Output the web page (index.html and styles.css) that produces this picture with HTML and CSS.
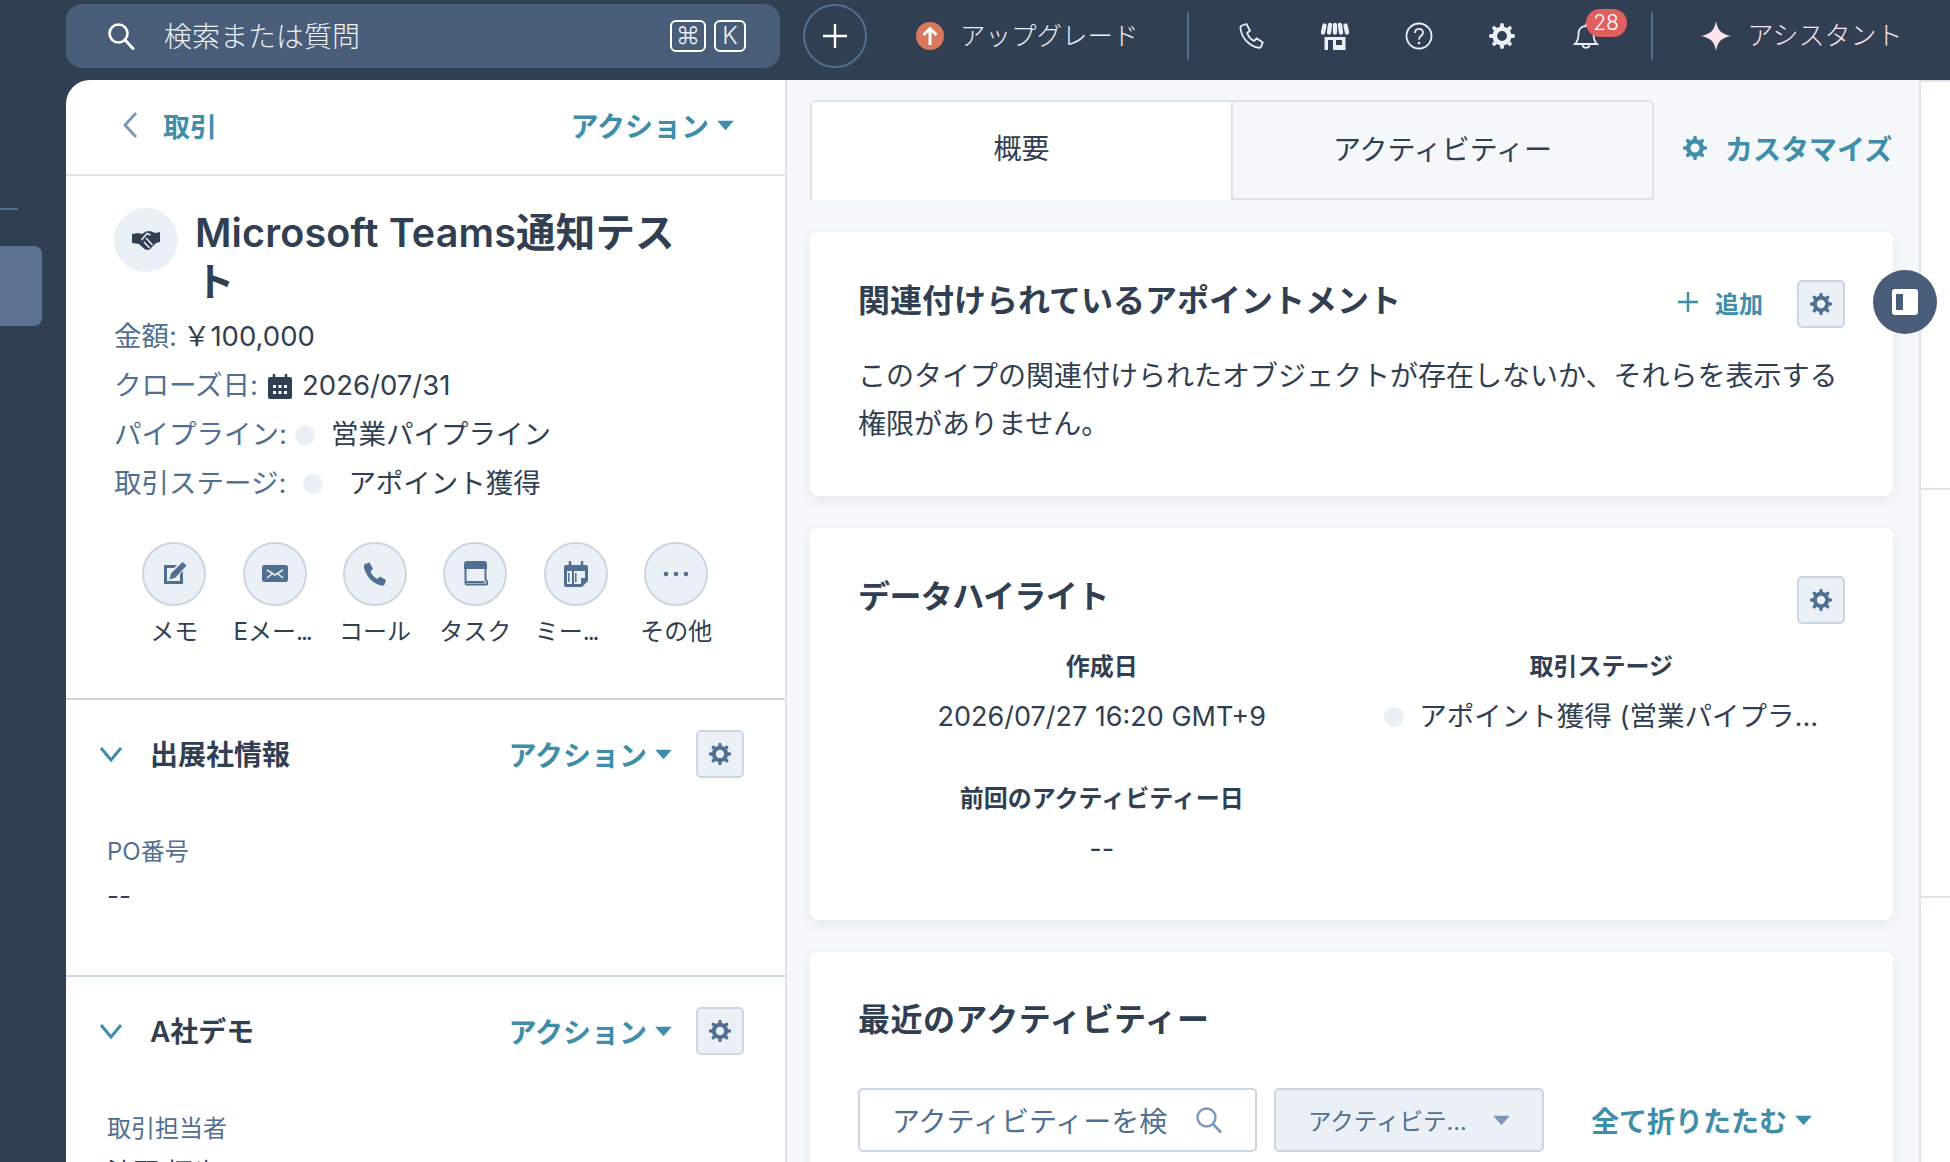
FILE: index.html
```html
<!DOCTYPE html>
<html lang="ja">
<head>
    <meta charset="UTF-8">
    <meta name="viewport" content="width=device-width, initial-scale=1.0">
    <title>Microsoft Teams通知テスト</title>
    <link rel="stylesheet" href="styles.css">
</head>
<body>
    <svg class="sprites" width="0" height="0" aria-hidden="true">
        <symbol id="gear" viewBox="0 0 24 24">
            <circle cx="12" cy="12" r="6.2" fill="none" stroke="currentColor" stroke-width="4"/>
            <path d="M12 2.5v3M12 18.5v3M2.5 12h3M18.5 12h3M5.3 5.3l2.1 2.1M18.7 18.7l-2.1-2.1M18.7 5.3l-2.1 2.1M5.3 18.7l2.1-2.1" stroke="currentColor" stroke-width="3.4" stroke-linecap="round"/>
        </symbol>
        <symbol id="caret" viewBox="0 0 12 8"><path d="M0 .5h12L6 7.5z" fill="currentColor"/></symbol>
        <symbol id="chev" viewBox="0 0 24 16"><path d="M2 2l10 12L22 2" fill="none" stroke="currentColor" stroke-width="3"/></symbol>
    </svg>

    <header class="topbar">
        <div class="search">
            <svg class="search-icon" viewBox="0 0 28 28"><circle cx="11.5" cy="11.5" r="9" fill="none" stroke="currentColor" stroke-width="2.6"/><path d="M18 18l8 8.5" stroke="currentColor" stroke-width="3" stroke-linecap="round"/></svg>
            <span class="search-text">検索または質問</span>
            <span class="kbd kbd-cmd">⌘</span>
            <span class="kbd">K</span>
        </div>
        <button class="plus" aria-label="追加">
            <svg viewBox="0 0 26 26"><path d="M13 1v24M1 13h24" stroke="currentColor" stroke-width="2.4"/></svg>
        </button>
        <div class="upgrade">
            <svg viewBox="0 0 28 28"><circle cx="14" cy="14" r="14" fill="#d9785a"/><path d="M14 23V7M7.5 13L14 6.5l6.5 6.5" fill="none" stroke="#fff" stroke-width="3"/></svg>
            <span>アップグレード</span>
        </div>
        <i class="bar-line"></i>
        <div class="tools">
            <svg viewBox="0 0 28 28"><path d="M4 3.5L8.5 2 12 8.5 9.2 11c1.200 3.600 3.500 6.300 6.800 8l2.700-2.500 6 3.800-1.500 4.300c-.5 1-1.800 1.300-3 1C11 24 3.500 15.500 2.500 6.500c-.1-1.200.5-2.700 1.500-3z" fill="none" stroke="currentColor" stroke-width="1.8"/></svg>
            <svg viewBox="0 0 28 28"><path d="M3.5 3.500L2 10.500M9 3l-1 7.500M14 3v7.500M19 3l1 7.500M24.500 3.500l1.500 7" stroke="currentColor" stroke-width="4.3" stroke-linecap="round"/><path d="M3.500 15h21v13h-21zM7 18v10h5V18zM15 18v5h6v-5z" fill="currentColor" fill-rule="evenodd"/></svg>
            <svg viewBox="0 0 28 28"><circle cx="14" cy="14" r="12.5" fill="none" stroke="currentColor" stroke-width="1.8"/><path d="M10 11c0-5.500 8-5.500 8-.5 0 3.500-4 3-4 7" fill="none" stroke="currentColor" stroke-width="1.8"/><circle cx="14" cy="21" r="1.3" fill="currentColor"/></svg>
            <svg viewBox="0 0 24 24"><use href="#gear"/></svg>
            <div class="bell">
                <svg viewBox="0 0 28 28"><path d="M14 1.500v2.500M14 4c-5 0-7.500 3.500-7.500 8 0 5-1 7.500-3.500 10h22c-2.500-2.500-3.500-5-3.500-10 0-4.500-2.500-8-7.500-8zM10.500 22c0 5 7 5 7 0" fill="none" stroke="currentColor" stroke-width="1.8"/></svg>
                <span class="badge">28</span>
            </div>
        </div>
        <i class="bar-line"></i>
        <div class="assistant">
            <svg viewBox="0 0 32 32"><path d="M16 0c1.500 9.500 5.500 14 16 16-10.500 2-14.500 6.500-16 16-1.500-9.500-5.500-14-16-16C10.500 14 14.500 9.500 16 0z" fill="#fbe4ec"/></svg>
            <span>アシスタント</span>
        </div>
    </header>

    <main class="layout">
        <nav class="rail">
            <i class="rail-line"></i>
            <i class="rail-active"></i>
        </nav>

        <aside class="left">
            <div class="left-head">
                <a class="back">
                    <svg viewBox="0 0 16 28"><path d="M14 2L3 14l11 12" fill="none" stroke="#7c98b6" stroke-width="2.8"/></svg>
                    <span>取引</span>
                </a>
                <a class="link">アクション<svg class="caret"><use href="#caret"/></svg></a>
            </div>

            <section class="record">
                <div class="title-row">
                    <div class="avatar">
                        <svg viewBox="0 0 28 20"><path d="M0 4l6-1 4 1 4-2.500L18 1l5 2 5-1v10l-4 1-7 7-4-.5L7 14l-7-1z" fill="currentColor"/><path d="M9.500 10l5.500-6.500 3.500 1.500M14 8l6.500 7M12 12l5.500 6" fill="none" stroke="#eaf0f6" stroke-width="1.5"/></svg>
                    </div>
                    <h1>Microsoft Teams通知テスト</h1>
                </div>
                <div class="meta">
                    <div><span class="key">金額:</span><span class="amount">￥100,000</span></div>
                    <div><span class="key">クローズ日:</span>
                        <svg class="cal" viewBox="0 0 24 26"><path d="M2 4h20a2 2 0 0 1 2 2v18a2 2 0 0 1-2 2H2a2 2 0 0 1-2-2V6a2 2 0 0 1 2-2z" fill="currentColor"/><path d="M6 1v5M18 1v5" stroke="currentColor" stroke-width="2.5"/><path d="M5 12h3v3H5zM10.500 12h3v3h-3zM16 12h3v3h-3zM5 18h3v3H5zM10.500 18h3v3h-3zM16 18h3v3h-3z" fill="#fff"/></svg>
                        <span>2026/07/31</span></div>
                    <div><span class="key">パイプライン:</span><i class="dot"></i><span>営業パイプライン</span></div>
                    <div><span class="key">取引ステージ:</span><i class="dot dot-wide"></i><span>アポイント獲得</span></div>
                </div>
                <div class="actions">
                    <div class="action">
                        <span class="round"><svg viewBox="0 0 26 26"><path d="M3 4h13l-3 3H6v13h13v-7l3-3v13H3z" fill="#516f90"/><path d="M21.500 1l4 3.500-11 12-6 2 1.500-6z" fill="#516f90"/></svg></span>
                        <span class="action-name">メモ</span>
                    </div>
                    <div class="action">
                        <span class="round"><svg viewBox="0 0 26 20"><rect y="1" width="26" height="17" rx="2.5" fill="#516f90"/><path d="M5 6l8 5 8-5M5 14l5-4M21 14l-5-4" fill="none" stroke="#eaf0f6" stroke-width="1.6"/></svg></span>
                        <span class="action-name action-cut">Eメー<span class="dots">...</span></span>
                    </div>
                    <div class="action">
                        <span class="round"><svg viewBox="0 0 26 26"><path d="M3 3l4.500-1.500L11 8 8.500 10.500c1 3 3.500 5.500 7 7.500l2.500-2.500 6 3.500-1.500 4.500c-.5 1-2 1.500-3 1C10 23 3.500 14 2 6.500c-.2-1.500 0-3 1-3.500z" fill="#516f90"/></svg></span>
                        <span class="action-name">コール</span>
                    </div>
                    <div class="action">
                        <span class="round"><svg viewBox="0 0 26 26"><path d="M2 3a3 3 0 0 1 3-3h17a3 3 0 0 1 3 3v5H2z" fill="#516f90"/><path d="M3.500 8v14c0 1 .5 1.500 1.500 1.500h19c1.500 0 1.500-1 1-2.500l-1.500-3V8M3.500 21h19" fill="none" stroke="#516f90" stroke-width="2"/></svg></span>
                        <span class="action-name">タスク</span>
                    </div>
                    <div class="action">
                        <span class="round"><svg viewBox="0 0 24 26"><path d="M2 4h20a2 2 0 0 1 2 2v14l-6 6H2a2 2 0 0 1-2-2V6a2 2 0 0 1 2-2z" fill="#516f90"/><path d="M6 0v6M18 0v6" stroke="#516f90" stroke-width="2.5"/><path d="M3 10h5v13H3zM10 10h5v13h-5zM15 10h6v7h-4v6h-2z" fill="#eaf0f6"/><path d="M4.800 12v9M11.800 12v9" stroke="#516f90" stroke-width="1.5"/></svg></span>
                        <span class="action-name action-cut">ミー<span class="dots">...</span></span>
                    </div>
                    <div class="action">
                        <span class="round"><svg viewBox="0 0 26 6"><circle cx="3" cy="3" r="2.3" fill="#516f90"/><circle cx="13" cy="3" r="2.3" fill="#516f90"/><circle cx="23" cy="3" r="2.3" fill="#516f90"/></svg></span>
                        <span class="action-name">その他</span>
                    </div>
                </div>
            </section>

            <section class="block">
                <div class="block-head">
                    <svg class="chev"><use href="#chev"/></svg>
                    <h2>出展社情報</h2>
                    <a class="link">アクション<svg class="caret"><use href="#caret"/></svg></a>
                    <button class="cog"><svg><use href="#gear"/></svg></button>
                </div>
                <div class="field-label">PO番号</div>
                <div class="field-value">--</div>
            </section>

            <section class="block">
                <div class="block-head">
                    <svg class="chev"><use href="#chev"/></svg>
                    <h2>A社デモ</h2>
                    <a class="link">アクション<svg class="caret"><use href="#caret"/></svg></a>
                    <button class="cog"><svg><use href="#gear"/></svg></button>
                </div>
                <div class="field-label">取引担当者</div>
                <div class="field-value">池野 拓也</div>
            </section>
        </aside>

        <div class="center">
            <div class="tab-row">
                <div class="tabs">
                    <div class="tab tab-on">概要</div>
                    <div class="tab">アクティビティー</div>
                </div>
                <a class="customize"><svg><use href="#gear"/></svg>カスタマイズ</a>
            </div>

            <section class="card card-assoc">
                <div class="card-head">
                    <h3>関連付けられているアポイントメント</h3>
                    <a class="add"><svg viewBox="0 0 22 22"><path d="M11 1v20M1 11h20" stroke="currentColor" stroke-width="2.4"/></svg>追加</a>
                    <button class="cog"><svg><use href="#gear"/></svg></button>
                </div>
                <p class="empty">このタイプの関連付けられたオブジェクトが存在しないか、それらを表示する権限がありません。</p>
            </section>

            <section class="card card-data">
                <div class="card-head">
                    <h3>データハイライト</h3>
                    <button class="cog"><svg><use href="#gear"/></svg></button>
                </div>
                <div class="highlights">
                    <div class="hl">
                        <h4>作成日</h4>
                        <div>2026/07/27 16:20 GMT+9</div>
                    </div>
                    <div class="hl">
                        <h4>取引ステージ</h4>
                        <div class="hl-stage"><i class="dot"></i><span>アポイント獲得 (営業パイプラ...</span></div>
                    </div>
                    <div class="hl">
                        <h4>前回のアクティビティー日</h4>
                        <div>--</div>
                    </div>
                </div>
            </section>

            <section class="card card-recent">
                <h3>最近のアクティビティー</h3>
                <div class="filters">
                    <div class="input">
                        <span>アクティビティーを検</span>
                        <svg viewBox="0 0 28 28"><circle cx="11.5" cy="11.5" r="9" fill="none" stroke="#7c98b6" stroke-width="2.4"/><path d="M18 18l8 8.500" stroke="#7c98b6" stroke-width="2.6"/></svg>
                    </div>
                    <div class="select">
                        <span>アクティビテ...</span>
                        <svg class="caret caret-gray"><use href="#caret"/></svg>
                    </div>
                    <a class="link">全て折りたたむ<svg class="caret"><use href="#caret"/></svg></a>
                </div>
            </section>
        </div>

        <aside class="side">
            <i class="side-cell"></i>
            <i class="side-cell"></i>
        </aside>

        <button class="panel-toggle" aria-label="パネル">
            <svg viewBox="0 0 26 26"><path d="M3 0h20a3 3 0 0 1 3 3v20a3 3 0 0 1-3 3H3a3 3 0 0 1-3-3V3a3 3 0 0 1 3-3zm1 5v16h7V5z" fill="#fff" fill-rule="evenodd"/></svg>
        </button>
    </main>
</body>
</html>
```

FILE: styles.css
```css
:root {
    --navy: #313f52;
    --slate: #4a5d78;
    --muted: #516f90;
    --teal: #3f8ea9;
    --line: #dfe3eb;
    --line-dark: #cbd6e2;
    --soft: #eaf0f6;
    --page: #f5f8fa;
}
*, *::before, *::after { box-sizing: border-box; margin: 0; padding: 0; }
html, body { height: 100%; overflow: hidden; }
body {
    font-family: Inter, "Noto Sans CJK JP", sans-serif;
    background: var(--navy);
    color: var(--navy);
    font-size: 27px;
}
.sprites { position: absolute; }
i { display: block; font-style: normal; }
button { border: 0; background: none; font: inherit; color: inherit; }

/* --- top bar --- */
.topbar { height: 80px; display: flex; align-items: center; padding: 0 0 9px 66px; color: var(--soft); font-weight: 300; }
.search { width: 714px; height: 64px; background: var(--slate); border-radius: 16px; display: flex; align-items: center; padding: 0 34px 0 41px; font-size: 28px; }
.search-icon { width: 28px; height: 28px; color: #fff; }
.search-text { margin-left: 29px; margin-right: auto; padding-bottom: 2px; }
.kbd { width: 32px; height: 32px; margin-left: 3px; border: 2px solid #fff; border-radius: 6px; display: flex; align-items: center; justify-content: center; font-size: 24px; line-height: 1; }
.kbd-cmd { width: 36px; margin-right: 5px; }
.plus { width: 64px; height: 64px; margin-left: 23px; border: 2px solid var(--muted); border-radius: 50%; display: flex; align-items: center; justify-content: center; color: #fff; }
.plus svg { width: 26px; height: 26px; }
.upgrade { display: flex; align-items: center; gap: 16px; margin-left: 49px; font-size: 25.5px; }
.upgrade svg { width: 28px; height: 28px; }
.upgrade span, .assistant span { padding-bottom: 4px; }
.bar-line { width: 2px; height: 48px; background: var(--muted); }
.upgrade + .bar-line { margin-left: 48px; }
.tools { display: flex; align-items: center; gap: 55.5px; margin-left: 49px; width: 413px; }
.tools svg { width: 28px; height: 28px; flex: none; }
.bell { position: relative; width: 28px; height: 28px; }
.badge { position: absolute; left: 14px; top: -13px; width: 41px; height: 28px; background: #e0605f; border-radius: 14px; color: #fff; font-size: 21px; text-align: center; line-height: 28px; }
.assistant { display: flex; align-items: center; gap: 17px; margin-left: 48px; color: #fbe4ec; font-size: 26px; }
.assistant svg { width: 30px; height: 30px; }

/* --- layout --- */
.layout { position: relative; display: flex; height: calc(100vh - 80px); }
.rail { width: 66px; flex: none; }
.rail-line { width: 18px; height: 2px; margin-top: 128px; background: var(--muted); }
.rail-active { width: 42px; height: 80px; margin-top: 36px; background: #5b7391; border-radius: 0 8px 8px 0; }

/* --- left panel --- */
.left { width: 721px; flex: none; background: #fff; border-right: 2px solid var(--line); border-top-left-radius: 24px; overflow: hidden; }
.left-head { height: 96px; display: flex; align-items: center; justify-content: space-between; padding: 0 51px 4px 56px; border-bottom: 2px solid var(--line); }
.back { display: flex; align-items: center; gap: 25px; color: var(--teal); font-weight: 600; font-size: 27px; }
.back svg { width: 16px; height: 28px; }
.link { display: inline-flex; align-items: center; color: var(--teal); font-weight: 600; font-size: 28px; white-space: nowrap; }
.caret { width: 17px; height: 11px; margin-left: 8px; }
.record { height: 524px; padding: 32px 0 0 48px; border-bottom: 2px solid var(--line-dark); }
.title-row { display: flex; gap: 17px; }
.avatar { width: 64px; height: 64px; flex: none; background: var(--soft); border-radius: 50%; display: flex; align-items: center; justify-content: center; }
.avatar svg { width: 28px; height: 20px; }
h1 { width: 490px; margin-top: 1px; font-size: 39.5px; font-weight: 600; line-height: 49px; letter-spacing: .15px; }
.meta { margin-top: 5px; line-height: 49px; font-size: 27.5px; }
.meta > div { display: flex; align-items: center; column-gap: 10px; white-space: nowrap; }
.key { color: var(--muted); }
.amount { margin-left: -4px; }
.cal { width: 24px; height: 26px; }
.dot { width: 20px; height: 20px; flex: none; background: var(--soft); border-radius: 50%; margin: 0 6px 0 -2px; }
.dot-wide { margin: 0 15px 0 7px; }
.actions { display: flex; margin: 34px 0 0 10px; }
.action { width: 100.4px; display: flex; flex-direction: column; align-items: center; }
.round { width: 64px; height: 64px; background: var(--soft); border: 2px solid var(--line-dark); border-radius: 50%; display: flex; align-items: center; justify-content: center; }
.round svg { width: 26px; height: 26px; }
.action-name { margin-top: 6px; font-size: 24px; line-height: 40px; white-space: nowrap; }
.action-cut { width: 82px; }
.dots { letter-spacing: -2px; }
.block { height: 277px; padding: 0 41px 0 33px; border-bottom: 2px solid var(--line-dark); }
.block-head { height: 108px; display: flex; align-items: center; }
.chev { width: 24px; height: 16px; color: var(--teal); margin-right: 27px; }
h2 { font-size: 28px; font-weight: 600; margin: 0 auto 2px 0; }
.cog { width: 48px; height: 48px; flex: none; background: var(--soft); border: 2px solid var(--line-dark); border-radius: 5px; display: flex; align-items: center; justify-content: center; color: var(--muted); }
.cog svg { width: 24px; height: 24px; }
.block .link { margin-right: 24px; }
.field-label { margin: 24px 0 0 8px; font-size: 24px; line-height: 40px; color: var(--muted); }
.field-value { margin: 4px 0 0 8px; font-size: 26px; line-height: 40px; }

/* --- center --- */
.center { width: 1132px; flex: none; background: var(--page); padding: 20px 26px 0 23px; overflow: hidden; }
.tab-row { display: flex; align-items: center; }
.tabs { width: 844px; height: 100px; display: flex; border: 2px solid var(--line); border-bottom: 0; border-radius: 6px 6px 0 0; }
.tab { flex: 1; display: flex; align-items: center; justify-content: center; font-size: 28px; padding-bottom: 5px; border-bottom: 2px solid var(--line); }
.tab + .tab { border-left: 2px solid var(--line); }
.tab-on { background: #fff; border-bottom: 0; padding-bottom: 9px; }
.customize { display: flex; align-items: center; gap: 17px; margin: -4px 0 0 28px; color: var(--teal); font-weight: 700; font-size: 28px; white-space: nowrap; }
.customize svg { width: 26px; height: 26px; }
.card { background: #fff; border-radius: 8px; box-shadow: 0 4px 12px rgba(45,62,80,.08); padding: 0 48px; margin-top: 32px; }
.card-assoc { height: 264px; padding-top: 48px; }
.card-data { height: 392px; padding-top: 48px; }
.card-recent { height: 300px; padding-top: 46px; }
.card-head { display: flex; align-items: center; height: 48px; }
h3 { font-size: 32px; font-weight: 600; margin-right: auto; line-height: 44px; }
.card-head h3 { margin-bottom: 6px; }
.card-data h3 { letter-spacing: -.6px; }
.card-recent h3 { letter-spacing: .45px; }
.add { display: flex; align-items: center; gap: 16px; margin: -4px 34px 0 0; color: var(--teal); font-weight: 600; font-size: 24px; }
.add svg { width: 22px; height: 22px; }
.empty { margin-top: 24px; font-size: 28px; line-height: 48px; }
.highlights { display: grid; grid-template-columns: 1fr 1fr; row-gap: 32px; margin: 20px -6px 0 -6px; }
.hl { text-align: center; line-height: 55px; font-size: 27px; }
.hl h4 { font-size: 24px; font-weight: 600; line-height: 45px; }
.hl-stage { display: flex; justify-content: center; align-items: center; white-space: nowrap; font-size: 27.5px; }
.hl-stage .dot { margin: 0 15px 0 0; }
.filters { display: flex; align-items: center; margin-top: 46px; }
.input, .select { height: 64px; display: flex; align-items: center; border: 2px solid var(--line-dark); border-radius: 5px; color: var(--muted); white-space: nowrap; }
.input { width: 399px; background: #fff; padding: 0 32px; font-size: 28px; justify-content: space-between; }
.input svg { width: 28px; height: 28px; }
.select { width: 270px; margin-left: 17px; padding: 0 32px; background: var(--soft); font-size: 23.5px; justify-content: space-between; }
.caret-gray { color: #7c98b6; margin-left: 0; }
.filters .link { margin-left: 47px; }

/* --- right side --- */
.side { flex: 1; background: #fff; border-left: 2px solid var(--line); border-top: 2px solid var(--line); }
.side-cell { height: 408px; border-bottom: 2px solid var(--line); }
.panel-toggle { position: absolute; left: 1873px; top: 190px; width: 64px; height: 64px; background: var(--slate); border-radius: 50%; display: flex; align-items: center; justify-content: center; }
.panel-toggle svg { width: 26px; height: 26px; }
```
